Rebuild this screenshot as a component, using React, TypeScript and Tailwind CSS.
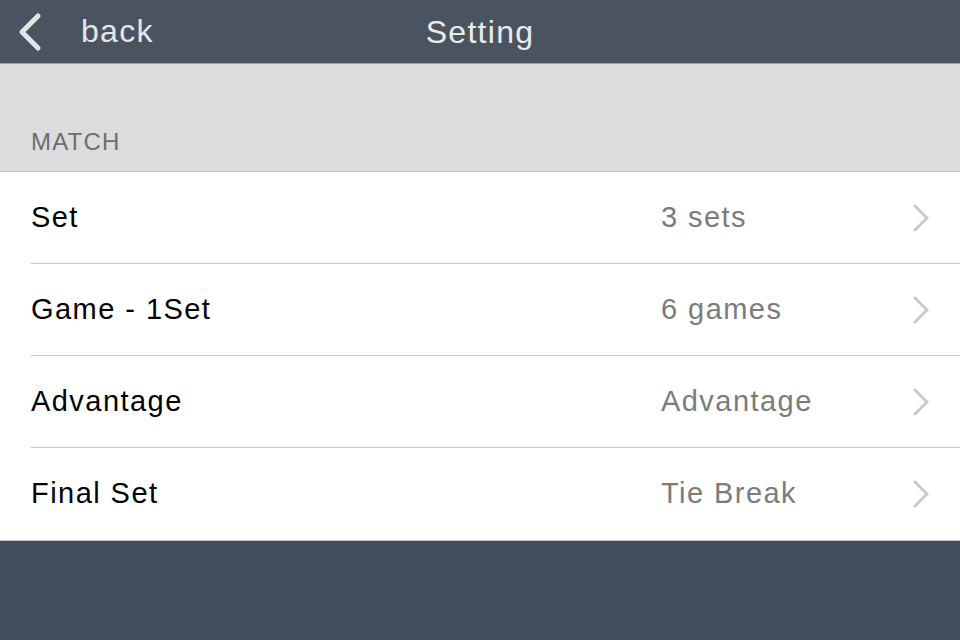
import React from "react";

const rows = [
  { label: "Set", value: "3 sets" },
  { label: "Game - 1Set", value: "6 games" },
  { label: "Advantage", value: "Advantage" },
  { label: "Final Set", value: "Tie Break" },
];

function Chevron() {
  return (
    <svg width="20" height="28" viewBox="0 0 20 28" fill="none" stroke="#c7c7cc" strokeWidth="2.8" strokeLinecap="round" strokeLinejoin="miter">
      <path d="M3 2 L15 14 L3 26" />
    </svg>
  );
}

export default function App() {
  return (
    <div className="flex flex-col w-[960px] h-[640px] bg-[#434f5e] overflow-hidden" style={{ fontFamily: "'Liberation Sans', Arial, sans-serif" }}>
      {/* Nav bar */}
      <div className="relative flex items-center h-[64px] bg-[#4a5461] border-b border-[#9a9fa6] shrink-0">
        <button className="flex items-center h-full pl-[14px] text-[#e6e6e6]">
          <svg width="30" height="40" viewBox="0 0 30 40" fill="none" stroke="#e4e4e4" strokeWidth="5" strokeLinecap="round" strokeLinejoin="round">
            <path d="M24 4 L8 20 L24 36" />
          </svg>
          <span className="ml-[37px] text-[32px] leading-none tracking-[0.04em] -mt-[2px]">back</span>
        </button>
        <div className="absolute inset-0 flex items-center justify-center pointer-events-none">
          <span className="text-[32px] leading-none tracking-[0.04em] text-[#ebebeb]">Setting</span>
        </div>
      </div>

      {/* Section header */}
      <div className="flex items-end h-[108px] bg-[#dcdcdc] border-b border-[#c8c7cc] pl-[31px] pb-[17px] shrink-0">
        <span className="text-[24px] leading-none tracking-[0.05em] text-[#6d6d72]">MATCH</span>
      </div>

      {/* Rows */}
      <div className="bg-white border-b border-[#c8c7cc] shrink-0">
        {rows.map((r, i) => (
          <div key={r.label} className="pl-[31px]">
            <div className={`flex items-center h-[92px] pr-[28px] ${i < rows.length - 1 ? "border-b border-[#c8c7cc]" : ""}`}>
              <span className="flex-1 text-[29px] tracking-[0.05em] text-black">{r.label}</span>
              <span className="w-[251px] text-[29px] tracking-[0.05em] text-[#7b7b7b]">{r.value}</span>
              <Chevron />
            </div>
          </div>
        ))}
      </div>

      <div className="flex-1" />
    </div>
  );
}
